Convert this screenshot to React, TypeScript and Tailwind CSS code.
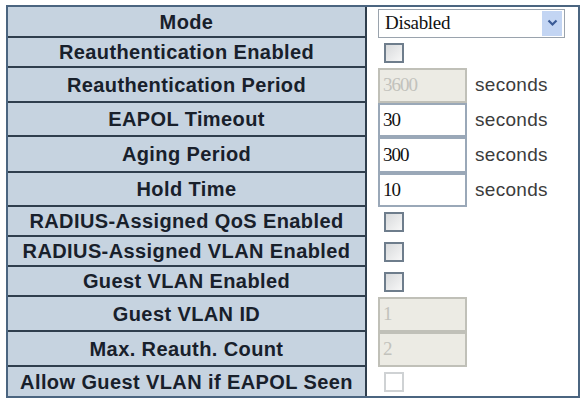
type Field =
  | { label: string; h: number; kind: 'select'; value: string }
  | { label: string; h: number; kind: 'check'; disabled?: boolean }
  | { label: string; h: number; kind: 'text'; value: string; disabled?: boolean; unit?: string }

const fields: Field[] = [
  { label: 'Mode', h: 31, kind: 'select', value: 'Disabled' },
  { label: 'Reauthentication Enabled', h: 30, kind: 'check' },
  { label: 'Reauthentication Period', h: 35, kind: 'text', value: '3600', disabled: true, unit: 'seconds' },
  { label: 'EAPOL Timeout', h: 34, kind: 'text', value: '30', unit: 'seconds' },
  { label: 'Aging Period', h: 36, kind: 'text', value: '300', unit: 'seconds' },
  { label: 'Hold Time', h: 34, kind: 'text', value: '10', unit: 'seconds' },
  { label: 'RADIUS-Assigned QoS Enabled', h: 30, kind: 'check' },
  { label: 'RADIUS-Assigned VLAN Enabled', h: 30, kind: 'check' },
  { label: 'Guest VLAN Enabled', h: 30, kind: 'check' },
  { label: 'Guest VLAN ID', h: 35, kind: 'text', value: '1', disabled: true },
  { label: 'Max. Reauth. Count', h: 35, kind: 'text', value: '2', disabled: true },
  { label: 'Allow Guest VLAN if EAPOL Seen', h: 29, kind: 'check', disabled: true },
]

function Checkbox({ disabled }: { disabled?: boolean }) {
  return (
    <div
      className={
        disabled
          ? 'ml-[17px] w-[20px] h-[20px] border-2 border-[#cfd2d4] bg-white'
          : 'ml-[17px] w-[20px] h-[20px] border-2 border-[#6e7d8c] bg-gradient-to-br from-[#d8dadc] to-[#f7f7f7]'
      }
    />
  )
}

function Value({ f }: { f: Field }) {
  if (f.kind === 'select') {
    return (
      <div className="ml-[11px] mt-[1px] w-[187px] h-[29px] border border-[#9aa3ad] bg-white flex items-center justify-between">
        <span className="pl-[6px] text-[19px] text-[#111] font-['Liberation_Serif',serif] tracking-[-0.3px]">
          {f.value}
        </span>
        <span className="w-[20px] h-[25px] mr-[2px] bg-[#c3d5f3] flex items-center justify-center">
          <svg width="11" height="8" viewBox="0 0 11 8">
            <path d="M1.5 1.5 L5.5 5.5 L9.5 1.5" fill="none" stroke="#3a5a96" strokeWidth="2.2" />
          </svg>
        </span>
      </div>
    )
  }
  if (f.kind === 'check') return <Checkbox disabled={f.disabled} />
  return (
    <div className="flex items-center h-full">
      <div
        className={
          f.disabled
            ? 'ml-[11px] w-[89px] h-full border-2 border-[#c0c0b8] bg-[#ecebe4] flex items-center pl-[3px] text-[19px] text-[#c2c2bc] font-["Liberation_Serif",serif] tracking-[-1px]'
            : 'ml-[11px] w-[89px] h-full border-2 border-[#9aa8b8] bg-white flex items-center pl-[3px] text-[19px] text-[#111] font-["Liberation_Serif",serif] tracking-[-1px]'
        }
      >
        {f.value}
      </div>
      {f.unit && (
        <span className="ml-[8px] text-[19px] text-[#3c3c3c] font-['Liberation_Sans',sans-serif] tracking-[0.3px]">
          {f.unit}
        </span>
      )}
    </div>
  )
}

export default function App() {
  return (
    <div className="w-[582px] h-[401px] bg-white pt-[5px] pl-[6px]">
      <div className="w-[574px] border-2 border-[#4b6580] grid grid-cols-[359px_1fr]">
        {fields.map((f, i) => {
          const last = i === fields.length - 1
          return (
            <div key={f.label} className="contents">
              <div
                style={{ height: f.h }}
                className={
                  'bg-[#c6d3e0] border-r-2 border-[#2f3e4d] flex items-center justify-center text-[20px] font-bold text-[#18202b] tracking-[0.4px] font-["Liberation_Sans",Arial,sans-serif] ' +
                  (last ? '' : 'border-b-2')
                }
              >
                {f.label}
              </div>
              <div style={{ height: f.h }} className="bg-white flex items-center">
                <Value f={f} />
              </div>
            </div>
          )
        })}
      </div>
    </div>
  )
}
